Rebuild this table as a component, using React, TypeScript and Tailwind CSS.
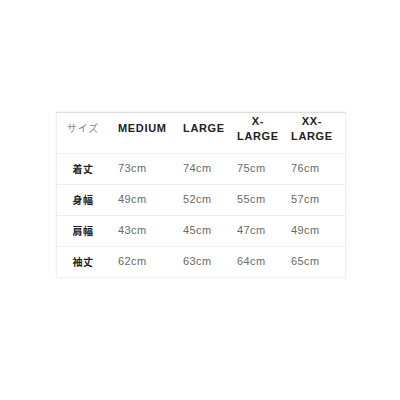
import React from 'react';

const sizes = ['MEDIUM', 'LARGE', 'X-LARGE', 'XX-LARGE'];

const rows: { label: string; values: string[] }[] = [
  { label: '着丈', values: ['73cm', '74cm', '75cm', '76cm'] },
  { label: '身幅', values: ['49cm', '52cm', '55cm', '57cm'] },
  { label: '肩幅', values: ['43cm', '45cm', '47cm', '49cm'] },
  { label: '袖丈', values: ['62cm', '63cm', '64cm', '65cm'] },
];

const cols = 'grid grid-cols-[52px_65px_54px_54px_65px]';

export default function App() {
  return (
    <div className="w-[400px] h-[400px] bg-white pt-[112px] pl-[56px] font-['Liberation_Sans','Noto_Sans_CJK_JP',sans-serif]">
      <div className="w-[290px] border-t border-[#dedede] border-x border-x-[#f0f0f0] shadow-[0_-1px_2px_rgba(0,0,0,0.05)]">
        {/* Header */}
        <div className={`${cols} h-[41px] border-b border-[#efefef] items-start`}>
          <div className="h-full flex items-center justify-center pb-[9px] text-[10px] tracking-[1px] text-[#8a8a8a]">
            サイズ
          </div>
          {sizes.map((s) => {
            const parts = s.includes('-') ? [s.split('-')[0] + '-', s.split('-')[1]] : [s];
            return (
              <div key={s} className="h-full flex items-center pl-[9px] pb-[9px]">
                <div className="inline-flex flex-col items-center text-[11px] leading-[15px] font-bold tracking-[0.06em] text-[#222]">
                  {parts.map((p) => (
                    <span key={p}>{p}</span>
                  ))}
                </div>
              </div>
            );
          })}
        </div>
        {/* Body */}
        {rows.map((r) => (
          <div key={r.label} className={`${cols} h-[31px] border-b border-[#efefef] items-center`}>
            <div className="flex justify-center pb-[2px] text-[10px] font-bold tracking-[0.5px] text-[#222] font-['Noto_Sans_CJK_JP',sans-serif]">
              {r.label}
            </div>
            {r.values.map((v, i) => (
              <div key={i} className="pl-[9px] pb-[2px] text-[11px] tracking-[0.04em] text-[#6a6a6a]">
                {v}
              </div>
            ))}
          </div>
        ))}
      </div>
    </div>
  );
}
